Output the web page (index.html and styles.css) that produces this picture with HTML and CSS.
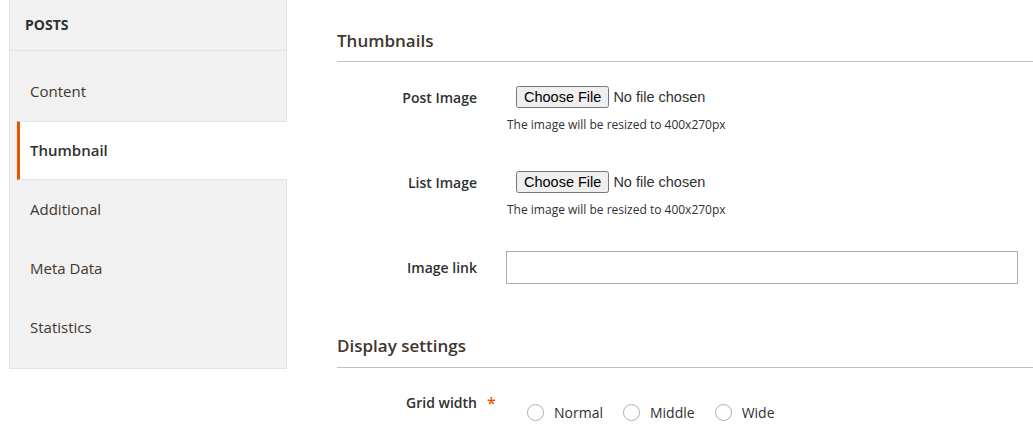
FILE: index.html
```html
<!DOCTYPE html>
<html lang="en">
<head>
  <meta charset="UTF-8">
  <title>Edit Post</title>
  <link rel="stylesheet" href="styles.css">
</head>
<body>
  <div class="page">
    <div class="tabs">
      <div class="tabs-title">Posts</div>
      <ul class="tabs-list">
        <li class="tab-item">Content</li>
        <li class="tab-item active">Thumbnail</li>
        <li class="tab-item">Additional</li>
        <li class="tab-item">Meta Data</li>
        <li class="tab-item">Statistics</li>
      </ul>
    </div>

    <div class="main">
      <div class="fieldset">
        <div class="legend">Thumbnails</div>

        <div class="field field-file">
          <label class="label">Post Image</label>
          <div class="control">
            <input type="file" class="file-input">
            <div class="note">The image will be resized to 400x270px</div>
          </div>
        </div>

        <div class="field field-file">
          <label class="label">List Image</label>
          <div class="control">
            <input type="file" class="file-input">
            <div class="note">The image will be resized to 400x270px</div>
          </div>
        </div>

        <div class="field field-text">
          <label class="label">Image link</label>
          <div class="control">
            <input type="text" class="text-input">
          </div>
        </div>
      </div>

      <div class="fieldset">
        <div class="legend legend-second">Display settings</div>

        <div class="field field-radio">
          <label class="label required">Grid width</label>
          <div class="control radios">
            <label class="radio"><input type="radio" name="grid"> Normal</label>
            <label class="radio"><input type="radio" name="grid"> Middle</label>
            <label class="radio"><input type="radio" name="grid"> Wide</label>
          </div>
        </div>
      </div>
    </div>
  </div>
</body>
</html>
```

FILE: styles.css
```css
body {
  margin: 0;
  font-family: "Open Sans", "Liberation Sans", sans-serif;
  color: #303030;
  background: #fff;
}
.page {
  display: flex;
  gap: 50px;
}
.tabs {
  width: 278px;
  box-sizing: border-box;
  margin-left: 9px;
  align-self: flex-start;
  background: #f1f1f1;
  border: 1px solid #e3e3e3;
  border-top: none;
}
.tabs-title {
  height: 51px;
  box-sizing: border-box;
  padding: 15px 15px 0;
  font-size: 14px;
  font-weight: 700;
  line-height: 19px;
  text-transform: uppercase;
  border-bottom: 1px solid #e3e3e3;
}
.tabs-list {
  list-style: none;
  margin: 0;
  padding: 11px 0 11px;
}
.tab-item {
  height: 59px;
  box-sizing: border-box;
  padding-left: 20px;
  font-size: 15px;
  line-height: 59px;
  color: #41362f;
}
.tab-item.active {
  background: #fff;
  margin: 0 -1px 0 7px;
  padding-left: 10px;
  border-left: 3px solid #eb5202;
  border-top: 1px solid #e3e3e3;
  border-bottom: 1px solid #e3e3e3;
  line-height: 57px;
  font-weight: 600;
  color: #303030;
}
.main {
  flex: 1;
}
.legend {
  margin-top: 31px;
  padding-bottom: 10px;
  font-size: 17px;
  font-weight: 600;
  line-height: 20px;
  color: #41362f;
  border-bottom: 1px solid #cac3b4;
}
.legend-second {
  margin-top: 52px;
  padding-bottom: 11px;
}
.field {
  display: grid;
  grid-template-columns: 140px 1fr;
  column-gap: 30px;
  padding-right: 14px;
}
.label {
  text-align: right;
  font-size: 14px;
  font-weight: 600;
  line-height: 19px;
}
.field-file {
  margin-top: 23px;
}
.field-file .label {
  padding-top: 3px;
}
.field-file + .field-file {
  margin-top: 37px;
}
.file-input {
  margin-left: 9px;
  font-family: "Liberation Sans", Arial, sans-serif;
  font-size: 14.5px;
  color: #303030;
}
.note {
  margin-top: 8px;
  font-size: 12px;
  line-height: 17px;
}
.field-text {
  margin-top: 33px;
}
.field-text .label {
  padding-top: 7px;
}
.text-input {
  width: 100%;
  height: 33px;
  box-sizing: border-box;
  border: 1px solid #adadad;
  margin: 0 0 0 -1px;
  font-size: 14px;
}
.field-radio {
  margin-top: 25px;
}
.required::after {
  content: "*";
  color: #eb5202;
  font-size: 16px;
  position: absolute;
  margin-left: 10px;
  margin-top: 1px;
}
.radios {
  display: flex;
  padding-top: 10px;
  padding-left: 20px;
}
.radio {
  display: flex;
  align-items: center;
  font-size: 14px;
  line-height: 19px;
  margin-right: 20px;
}
.radio input {
  appearance: none;
  width: 17px;
  height: 17px;
  margin: 0 10px 0 0;
  border: 1px solid #adadad;
  border-radius: 50%;
  background: #fff;
}
```
